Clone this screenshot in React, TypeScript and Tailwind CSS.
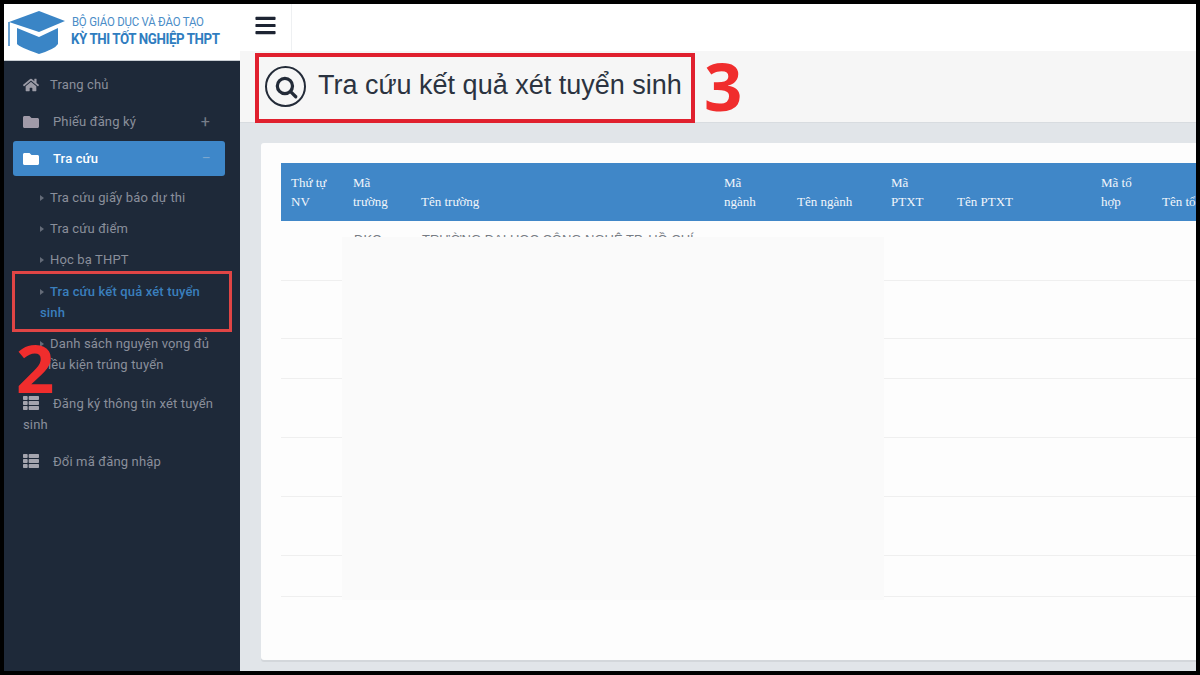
import React from 'react';
import { FaBars, FaFolder, FaHome, FaThList } from 'react-icons/fa';

const subItems = ['Tra cứu giấy báo dự thi', 'Tra cứu điểm', 'Học bạ THPT'];

const columns = [
  { w: 'w-[62px]', top: 'Thứ tự', bottom: 'NV' },
  { w: 'w-[68px]', top: 'Mã', bottom: 'trường' },
  { w: 'w-[303px]', top: '', bottom: 'Tên trường' },
  { w: 'w-[73px]', top: 'Mã', bottom: 'ngành' },
  { w: 'w-[94px]', top: '', bottom: 'Tên ngành' },
  { w: 'w-[66px]', top: 'Mã', bottom: 'PTXT' },
  { w: 'w-[144px]', top: '', bottom: 'Tên PTXT' },
  { w: 'w-[61px]', top: 'Mã tổ', bottom: 'hợp' },
  { w: 'w-[120px]', top: '', bottom: 'Tên tổ hợp' },
];

const rowHeights = ['h-[60px]', 'h-[58px]', 'h-[40px]', 'h-[59px]', 'h-[59px]', 'h-[59px]', 'h-[41px]'];

function Logo() {
  return (
    <svg viewBox="0 0 58 43" className="w-[58px] h-[43px] shrink-0">
      <path d="M9 17 L9 33 Q11 36 31 43 Q47 38 50 33 L50 17 L31 26 Z" fill="#3a85c6" />
      <path d="M1 11 L31 0 L57 10 L31 21 Z" fill="#3a85c6" />
      <path d="M1 11 L1 35" stroke="#3a85c6" strokeWidth="1.5" />
    </svg>
  );
}

function Arrow() {
  return <span className="inline-block mr-[6px] align-[1px] border-y-[3px] border-l-[4px] border-y-transparent border-l-[#646b78]" />;
}

export default function App() {
  return (
    <div className="relative w-[1200px] h-[675px] overflow-hidden border-4 border-black bg-[#e1e5e9] font-['Roboto',sans-serif] flex">
      <aside className="w-[236px] shrink-0 bg-[#1e2939] flex flex-col">
        <div className="h-[57px] bg-white flex items-center pl-[4px] gap-[5px] border-b border-[#c9ced4]">
          <Logo />
          <div className="flex flex-col">
            <span className="text-[12px] leading-[15px] text-[#4a8cc7] tracking-[-0.2px] pl-px origin-left scale-x-[0.95] whitespace-nowrap">BỘ GIÁO DỤC VÀ ĐÀO TẠO</span>
            <span className="text-[15px] leading-[19px] font-bold text-[#2f7dc0] tracking-[-0.45px] origin-left scale-x-[0.887] whitespace-nowrap">KỲ THI TỐT NGHIỆP THPT</span>
          </div>
        </div>

        <nav className="flex flex-col text-[13px] text-[#8a8f9b] tracking-[0.15px]">
          <div className="h-[37px] mt-[5px] pl-[19px] flex items-center gap-[11px]">
            <FaHome className="text-[#9b9ba6]" size={16} />
            <span>Trang chủ</span>
          </div>
          <div className="h-[37px] pl-[19px] pr-[30px] flex items-center">
            <FaFolder className="text-[#a09aa8] mr-[14px]" size={16} />
            <span>Phiếu đăng ký</span>
            <span className="ml-auto text-[16px] leading-none text-[#777d89]">+</span>
          </div>
          <div className="h-[35px] mt-[1px] ml-[9px] mr-[15px] pl-[10px] pr-[15px] rounded-[3px] bg-[#3e87c9] flex items-center text-white font-medium">
            <FaFolder className="mr-[14px]" size={16} />
            <span>Tra cứu</span>
            <span className="ml-auto text-[10px] leading-none text-[#7ba7cf]">—</span>
          </div>

          <ul className="mt-[6px] flex flex-col">
            {subItems.map((item) => (
              <li key={item} className="h-[31px] pl-[36px] flex items-center">
                <Arrow />
                {item}
              </li>
            ))}
            <li className="mt-[6px] pl-[36px] pr-[20px] leading-[21px] text-[#3a7fbd] font-medium">
              <Arrow />
              Tra cứu kết quả xét tuyển sinh
            </li>
            <li className="mt-[10px] pl-[36px] pr-[20px] leading-[21px]">
              <Arrow />
              Danh sách nguyện vọng đủ điều kiện trúng tuyển
            </li>
          </ul>

          <div className="mt-[18px] pl-[19px] pr-[20px] leading-[21px]">
            <FaThList className="inline text-[#a4a4ae] mr-[14px] align-[-3px]" size={16} />
            Đăng ký thông tin xét tuyển sinh
          </div>
          <div className="mt-[16px] pl-[19px] leading-[21px]">
            <FaThList className="inline text-[#a4a4ae] mr-[14px] align-[-3px]" size={16} />
            Đổi mã đăng nhập
          </div>
        </nav>
      </aside>

      <main className="flex-1 min-w-0 flex flex-col">
        <div className="h-[47px] shrink-0 bg-white flex">
          <div className="w-[52px] border-r border-[#eef0f2] flex items-center justify-center">
            <FaBars className="text-[#1d2433] -mt-[5px]" size={23} />
          </div>
        </div>

        <div className="h-[72px] shrink-0 bg-[#f6f6f6] border-b border-[#d8dce0] flex items-center pl-[25px] gap-[12px] font-['Liberation_Sans',sans-serif]">
          <div className="w-[41px] h-[41px] rounded-full border-2 border-[#232b38] flex items-center justify-center">
            <svg viewBox="0 0 24 24" className="w-[26px] h-[26px]" fill="none" stroke="#232b38" strokeWidth="3" strokeLinecap="round">
              <circle cx="11" cy="11" r="7" />
              <path d="M16.5 16.5 L21 21" />
            </svg>
          </div>
          <h1 className="text-[27px] leading-none text-[#2b3340] -mt-[3px]">Tra cứu kết quả xét tuyển sinh</h1>
        </div>

        <div className="flex-1 min-h-0 pt-[20px] pl-[21px] pb-[11px]">
          <div className="relative h-full bg-[#fdfdfd] rounded-l-[3px] shadow-[0_2px_0_#d3d7db] pt-[20px] pl-[20px] overflow-hidden font-['Liberation_Serif',serif] text-[13px]">
            <div className="flex w-[1000px] h-[58px] bg-[#4087c8] text-[#f2f6fb] leading-[19px]">
              {columns.map((col) => (
                <div key={col.bottom} className={`${col.w} shrink-0 pl-[10px] pt-[10px] flex flex-col`}>
                  <span className="h-[19px]">{col.top}</span>
                  <span>{col.bottom}</span>
                </div>
              ))}
            </div>
            <div className="w-[1000px] flex flex-col">
              {rowHeights.map((h, i) => (
                <div key={i} className={`${h} ${i === 0 ? 'pt-[12px]' : ''} border-b border-[#efefef] flex text-[#777c84] leading-[14px] font-['Liberation_Sans',sans-serif] text-[13px]`}>
                  {i === 0 && (
                    <>
                      <span className="ml-[73px] w-[68px]">DKC</span>
                      <span className="whitespace-nowrap">TRƯỜNG ĐẠI HỌC CÔNG NGHỆ TP. HỒ CHÍ</span>
                    </>
                  )}
                </div>
              ))}
            </div>
            {/* vùng che dữ liệu */}
            <div className="absolute left-[81px] top-[94px] w-[542px] h-[363px] bg-[#fafafa]" />
          </div>
        </div>
      </main>

      {/* chú thích đỏ */}
      <div className="absolute left-[8px] top-[267px] w-[220px] h-[61px] border-[3px] border-[#e04545]" />
      <div className="absolute left-[251px] top-[49px] w-[440px] h-[70px] border-4 border-[#e0202e]" />
      <span className="absolute left-[12px] top-[318px] text-[67px] leading-[90px] font-bold text-[#f02d2d] font-['Open_Sans',sans-serif]">2</span>
      <span className="absolute left-[700px] top-[36px] text-[67px] leading-[90px] font-bold text-[#f02d2d] font-['Open_Sans',sans-serif]">3</span>
    </div>
  );
}
